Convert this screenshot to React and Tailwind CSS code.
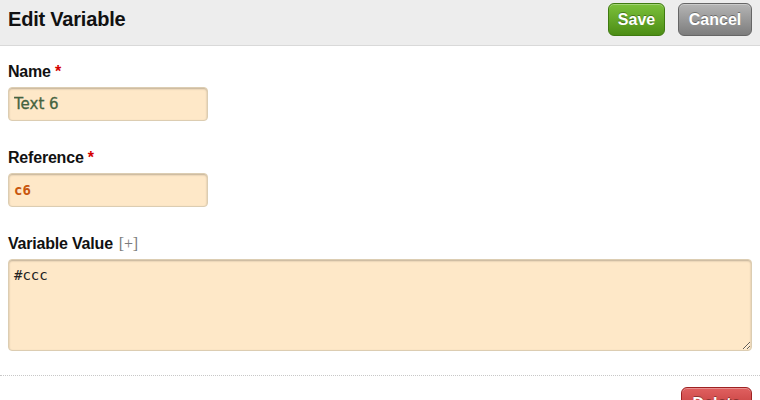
import React from "react";

function Label({ children, required, extra }) {
  return (
    <div className="text-[16px] leading-[20px] font-bold text-[#111] tracking-[-0.2px]">
      {children}
      {required && <span className="text-[#d40000]"> *</span>}
      {extra && (
        <span className="font-normal text-[#7a7a7a] ml-[6px] text-[16px] font-['Liberation_Serif',serif]">{extra}</span>
      )}
    </div>
  );
}

function App() {
  const field =
    "block bg-[#fee8c8] border border-[#dccdb2] rounded-[4px] shadow-[inset_0_1px_2px_rgba(0,0,0,0.25)] outline-none px-[5px]";

  return (
    <div className="w-[760px] h-[400px] overflow-hidden bg-white font-['Liberation_Sans',Arial,sans-serif]">
      <div className="h-[46px] flex items-start justify-between px-2 pt-[3px] bg-[#ededed] border-b border-[#d9d9d9]">
        <h1 className="text-[20px] leading-[33px] font-bold text-[#111] tracking-[-0.2px]">Edit Variable</h1>
        <div className="flex gap-[13px]">
          <button className="h-[33px] w-[57px] rounded-[6px] border border-[#3f7a10] bg-gradient-to-b from-[#7cc13a] to-[#4c8d14] text-white font-bold text-[16px] [text-shadow:0_-1px_0_rgba(0,0,0,0.35)] shadow-[inset_0_1px_0_rgba(255,255,255,0.3)]">
            Save
          </button>
          <button className="h-[33px] w-[74px] rounded-[6px] border border-[#666] bg-gradient-to-b from-[#b5b5b5] to-[#7d7d7d] text-white font-bold text-[16px] [text-shadow:0_-1px_0_rgba(0,0,0,0.35)] shadow-[inset_0_1px_0_rgba(255,255,255,0.3)]">
            Cancel
          </button>
        </div>
      </div>

      <div className="px-2 pt-4">
        <Label required>Name</Label>
        <input
          defaultValue="Text 6"
          className={`${field} mt-[5px] w-[200px] h-[34px] text-[15px] text-[#44633f] font-['DejaVu_Sans',sans-serif] [-webkit-text-stroke:0.3px_#44633f]`}
        />

        <div className="mt-[27px]">
          <Label required>Reference</Label>
        </div>
        <input
          defaultValue="c6"
          className={`${field} mt-[5px] w-[200px] h-[34px] text-[14px] font-bold text-[#c8560e] font-['DejaVu_Sans_Mono',monospace]`}
        />

        <div className="mt-[27px]">
          <Label extra="[+]">Variable Value</Label>
        </div>
        <textarea
          defaultValue="#ccc"
          className={`${field} mt-[5px] w-[744px] h-[92px] pt-[6px] text-[14px] leading-[18px] text-[#222] font-['DejaVu_Sans_Mono',monospace]`}
        />
      </div>

      <div className="mt-[24px] border-t border-dotted border-[#c8c8c8]" />

      <div className="flex justify-end px-2 pt-[11px]">
        <button className="h-[33px] w-[71px] rounded-[6px] border border-[#9e2222] bg-gradient-to-b from-[#e06060] to-[#b82c2c] text-white font-bold text-[16px] [text-shadow:0_-1px_0_rgba(0,0,0,0.35)] shadow-[inset_0_1px_0_rgba(255,255,255,0.3)]">
          Delete
        </button>
      </div>
    </div>
  );
}

export default App;
